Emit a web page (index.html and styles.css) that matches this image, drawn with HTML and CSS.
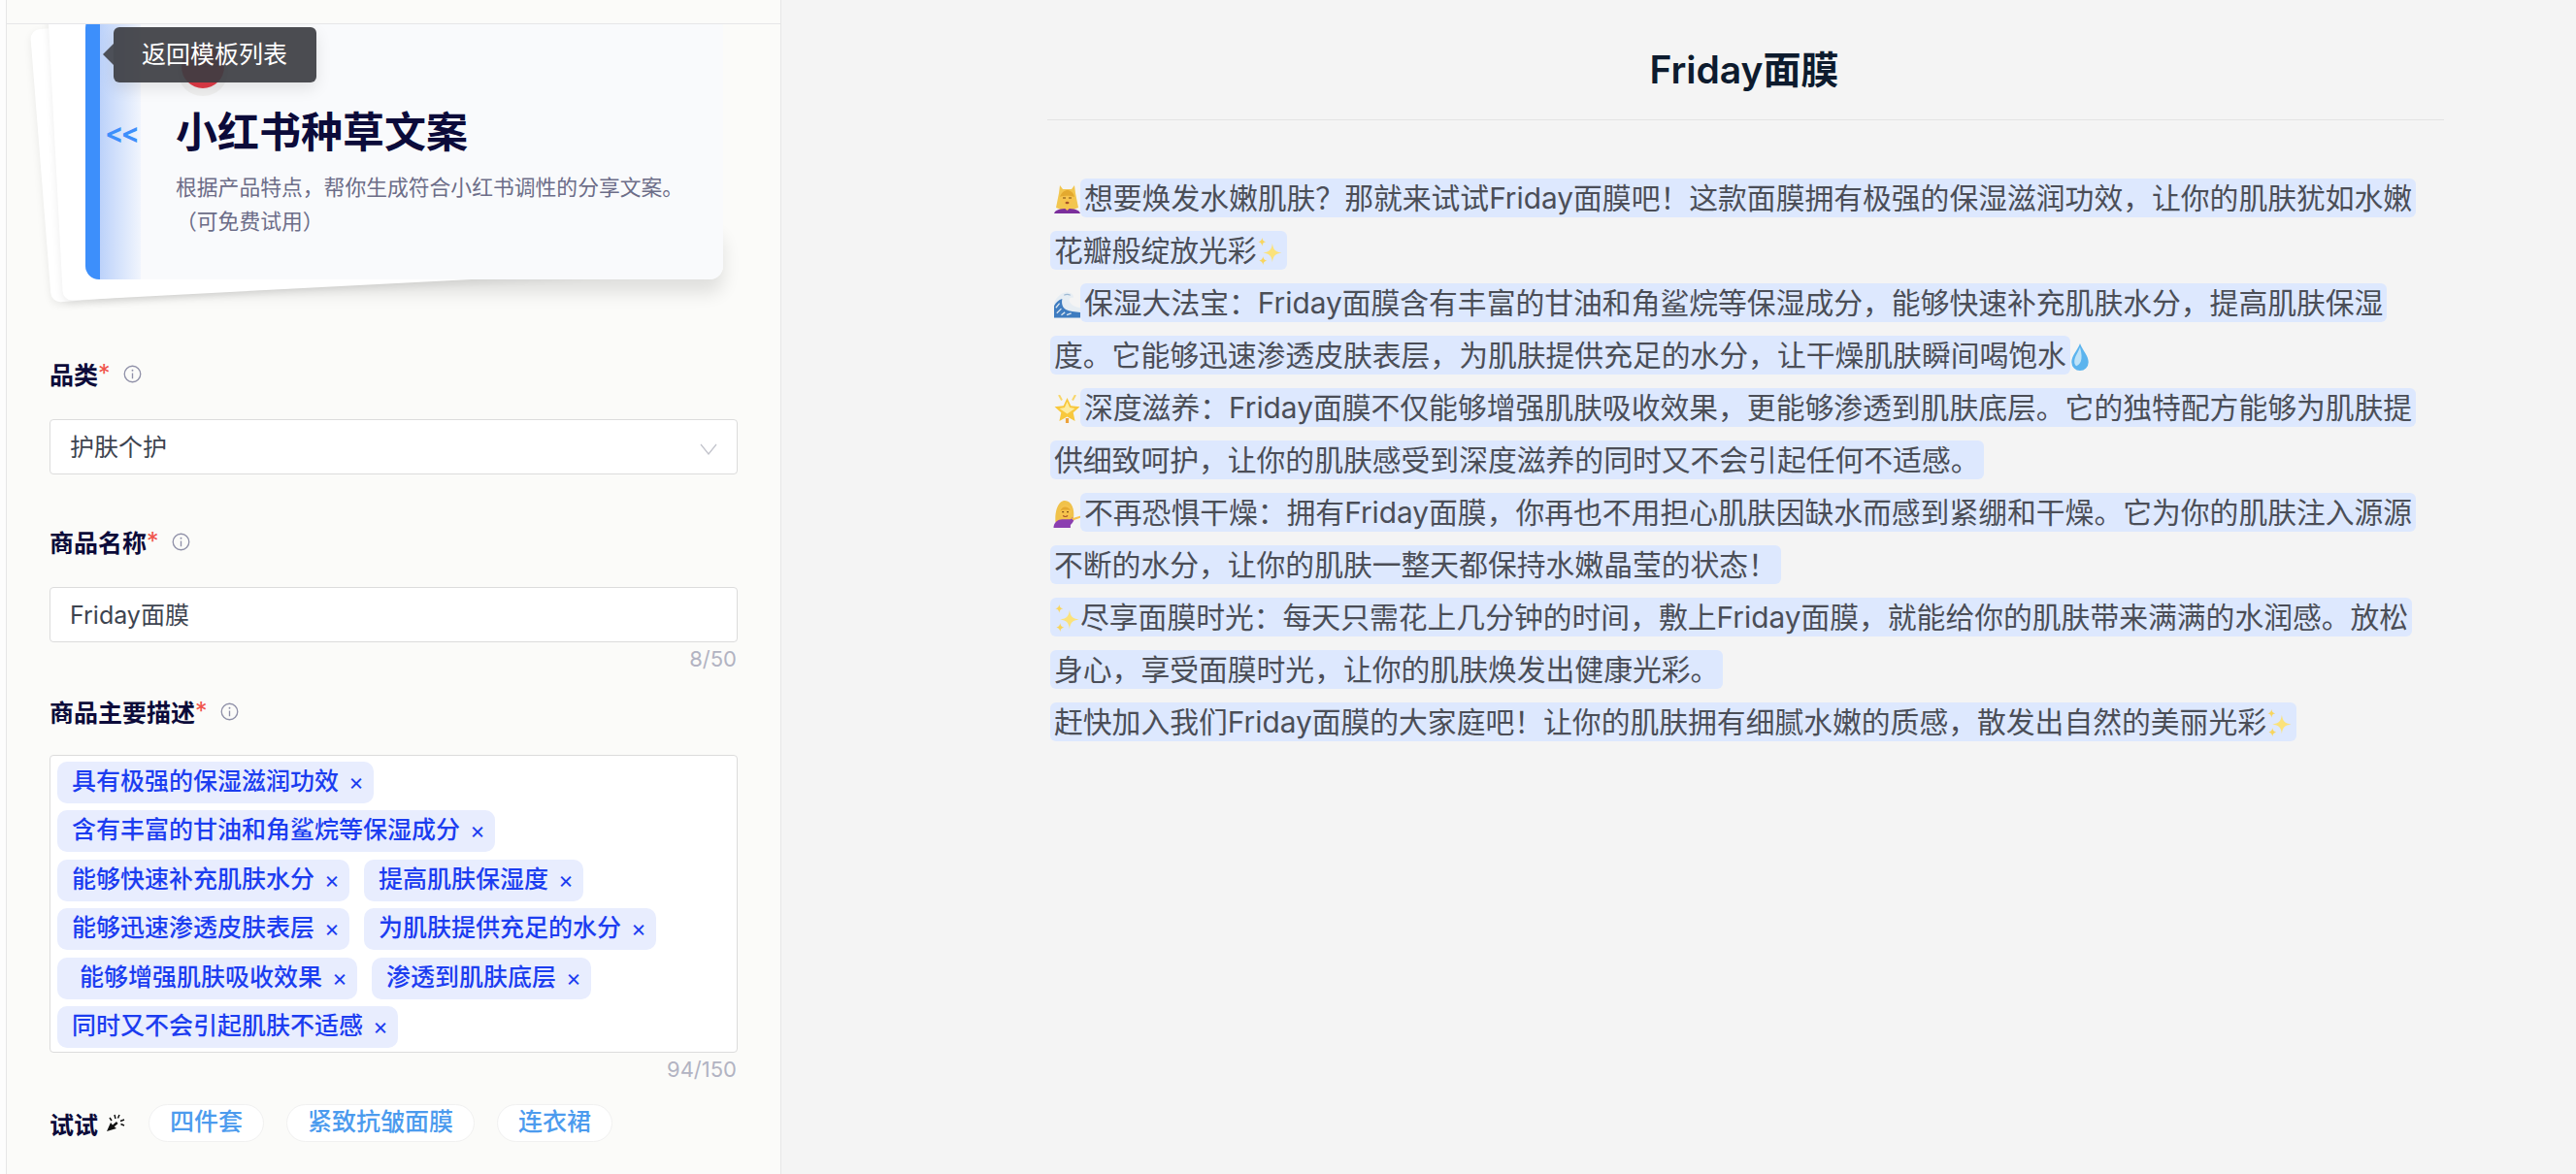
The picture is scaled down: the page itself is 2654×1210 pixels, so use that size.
FILE: index.html
```html
<!DOCTYPE html>
<html lang="zh-CN">
<head>
    <meta charset="UTF-8">
    <title>小红书种草文案</title>
    <link rel="stylesheet" href="styles.css">
</head>
<body>
<svg class="defs">
    <symbol id="e-woman" viewBox="0 0 27 29">
        <path d="M6 0l3 4h9l3-4 1 8 3 15-5 2H7l-5-2 3-15z" fill="#f2c64f"/>
        <ellipse cx="13.500" cy="13" rx="7" ry="8.500" fill="#f6c34d"/>
        <path d="M6 12c2-6 6-7 8-7s6 2 7 7c-4-1-9-2-15 0z" fill="#e3a92f"/>
        <path d="M9 13h3M15 13h3" stroke="#7a4a12" stroke-width="1.200"/>
        <ellipse cx="13.500" cy="18" rx="2" ry="1.200" fill="#a8552a"/>
        <path d="M0 29c1-4 7-5 13.500-5S26 25 27 29z" fill="#7b2f9c"/>
        <path d="M9 22h9l-4.500 4z" fill="#f6c34d"/>
    </symbol>
    <symbol id="e-wave" viewBox="0 0 29 30">
        <path d="M0 30V13C4 5 10 1 16 2c5 1 6 4 5 6-3-1-5 1-4 4 2 4 6 6 12 7v11z" fill="#e6edf3"/>
        <path d="M0 30V17c2-4 5-7 9-8-1 5 0 9 4 12 4 2 10 3 16 3v6z" fill="#3f7cc0"/>
        <path d="M2 19l4-5M3 25l5-5M8 27l4-3M14 27l5-2" stroke="#dfe8ef" stroke-width="1.400"/>
        <path d="M11 5c2-1 5-1 7 0" stroke="#9db9d3" stroke-width="1.200" fill="none"/>
    </symbol>
    <symbol id="e-star" viewBox="0 0 26 29">
        <path d="M13 3l3.800 8.200 9.200 1-6.800 6 1.900 8.800-8.100-4.600L4.900 27l1.900-8.800L0 12.200l9.200-1z" fill="#f8c83c"/>
        <path d="M13 7l2.600 6 5.400 1-8 5.500L5 14l5.400-1z" fill="#fdeca0"/>
        <path d="M4.500 0l3 5.500M21.500 0l-3 5.500" stroke="#f8d66a" stroke-width="2"/>
        <path d="M13 24v5" stroke="#eca23a" stroke-width="3.200"/>
    </symbol>
    <symbol id="e-tip" viewBox="0 0 30 30">
        <path d="M2 24C1 12 5 1 12 1s11 9 9 20l-4 3H6z" fill="#f0c24a"/>
        <ellipse cx="12.500" cy="13" rx="6.500" ry="7.500" fill="#f6c34d"/>
        <path d="M7 12c2-5 7-6 11-1-4 0-8-1-11 1z" fill="#e3a92f"/>
        <path d="M9 13h2M14 13h2" stroke="#7a4a12" stroke-width="1.400"/>
        <path d="M10 17c1 1.500 4 1.500 5 0" stroke="#a8552a" stroke-width="1.200" fill="none"/>
        <path d="M0 30c0-6 5-9 9-9h7c2 0 3 0 4-2l2 2c-1 3-3 5-4 6v3z" fill="#8b3fb0"/>
        <path d="M19 20c3-1 7-2 10-3 1 1 0 2-2 3l-6 2z" fill="#f6c34d"/>
    </symbol>
    <symbol id="e-spark" viewBox="0 0 27 30">
        <path d="M16 6c1 7 3 9 10 10-7 1-9 3-10 10-1-7-3-9-10-10 7-1 9-3 10-10z" fill="#fbe27a"/>
        <path d="M5 0c.5 3 1.500 4 4 4.500C6.500 5 5.500 6 5 9c-.5-3-1.500-4-4-4.500C3.500 4 4.500 3 5 0z" fill="#f8d55e"/>
        <path d="M6 20c.5 3 1.500 4 4 4.500-2.500.5-3.500 1.500-4 4.500-.5-3-1.500-4-4-4.500 2.500-.5 3.500-1.500 4-4.500z" fill="#f8d55e"/>
    </symbol>
    <symbol id="e-drop" viewBox="0 0 20 30">
        <path d="M10 1c3 8 9 13 9 20a9 9 0 0 1-18 0C1 14 7 9 10 1z" fill="#5cb4ee"/>
        <path d="M10 5C8 11 4 15 4 21c0 2 1 3 2 4 4-1 8-6 4-20z" fill="#bfe3f8"/>
    </symbol>
    <symbol id="i-info" viewBox="0 0 20 20">
        <circle cx="10" cy="10" r="8.700" fill="none" stroke="#8f90a8" stroke-width="1.400"/>
        <path d="M10 9v6" stroke="#8f90a8" stroke-width="1.400"/>
        <circle cx="10" cy="6" r="1" fill="#8f90a8"/>
    </symbol>
</svg>

<div class="edge"></div>

<aside class="side">
    <div class="top-band"></div>

    <div class="stack">
        <div class="sheet sheet-back"></div>
        <div class="sheet sheet-front"></div>
        <div class="card">
            <div class="card-strip"></div>
            <div class="card-back">&lt;&lt;</div>
            <div class="card-body">
                <div class="logo">小红书</div>
                <h1>小红书种草文案</h1>
                <p>根据产品特点，帮你生成符合小红书调性的分享文案。（可免费试用）</p>
            </div>
        </div>
        <div class="tooltip">返回模板列表</div>
    </div>

    <form class="form">
        <div class="field field-select">
            <label class="label">品类<em>*</em><svg class="info"><use href="#i-info"/></svg></label>
            <div class="select">
                <span>护肤个护</span>
                <svg class="chevron" viewBox="0 0 18 12"><path d="M1 1l8 10 8-10" fill="none" stroke="#c3c4cc" stroke-width="1.300"/></svg>
            </div>
        </div>

        <div class="field field-name">
            <label class="label">商品名称<em>*</em><svg class="info"><use href="#i-info"/></svg></label>
            <input class="input" type="text" value="Friday面膜">
            <div class="count">8/50</div>
        </div>

        <div class="field field-tags">
            <label class="label">商品主要描述<em>*</em><svg class="info"><use href="#i-info"/></svg></label>
            <div class="tags">
                <span class="tag">具有极强的保湿滋润功效<i>×</i></span>
                <span class="tag">含有丰富的甘油和角鲨烷等保湿成分<i>×</i></span>
                <span class="tag">能够快速补充肌肤水分<i>×</i></span>
                <span class="tag">提高肌肤保湿度<i>×</i></span>
                <span class="tag">能够迅速渗透皮肤表层<i>×</i></span>
                <span class="tag">为肌肤提供充足的水分<i>×</i></span>
                <span class="tag tag-space">能够增强肌肤吸收效果<i>×</i></span>
                <span class="tag">渗透到肌肤底层<i>×</i></span>
                <span class="tag">同时又不会引起肌肤不适感<i>×</i></span>
            </div>
            <div class="count">94/150</div>
        </div>

        <div class="try">
            <span class="try-label">试试</span>
            <svg class="try-icon" viewBox="0 0 20 20">
                <path d="M1 18l4-9 2 2.500L11 8l1.500 2-3.800 3.300L11 15z" fill="#111"/>
                <path d="M9 1l1 4M14 1l-1.500 3.500M19 6l-4 1.500M19 12l-3.500-1.500M4 4l2 3" stroke="#111" stroke-width="1.500"/>
            </svg>
            <span class="chip">四件套</span>
            <span class="chip">紧致抗皱面膜</span>
            <span class="chip">连衣裙</span>
        </div>
    </form>
</aside>

<main class="main">
    <div class="doc">
        <h2>Friday面膜</h2>
        <div class="text">
            <p><svg class="emoji"><use href="#e-woman"/></svg><span class="hl">想要焕发水嫩肌肤？那就来试试Friday面膜吧！这款面膜拥有极强的保湿滋润功效，让你的肌肤犹如水嫩花瓣般绽放光彩<svg class="emoji"><use href="#e-spark"/></svg></span></p>
            <p><svg class="emoji"><use href="#e-wave"/></svg><span class="hl">保湿大法宝：Friday面膜含有丰富的甘油和角鲨烷等保湿成分，能够快速补充肌肤水分，提高肌肤保湿度。它能够迅速渗透皮肤表层，为肌肤提供充足的水分，让干燥肌肤瞬间喝饱水</span><svg class="emoji emoji-drop"><use href="#e-drop"/></svg></p>
            <p><svg class="emoji"><use href="#e-star"/></svg><span class="hl">深度滋养：Friday面膜不仅能够增强肌肤吸收效果，更能够渗透到肌肤底层。它的独特配方能够为肌肤提供细致呵护，让你的肌肤感受到深度滋养的同时又不会引起任何不适感。</span></p>
            <p><svg class="emoji emoji-tip"><use href="#e-tip"/></svg><span class="hl">不再恐惧干燥：拥有Friday面膜，你再也不用担心肌肤因缺水而感到紧绷和干燥。它为你的肌肤注入源源不断的水分，让你的肌肤一整天都保持水嫩晶莹的状态！</span></p>
            <p><span class="hl"><svg class="emoji"><use href="#e-spark"/></svg>尽享面膜时光：每天只需花上几分钟的时间，敷上Friday面膜，就能给你的肌肤带来满满的水润感。放松身心，享受面膜时光，让你的肌肤焕发出健康光彩。</span></p>
            <p><span class="hl">赶快加入我们Friday面膜的大家庭吧！让你的肌肤拥有细腻水嫩的质感，散发出自然的美丽光彩<svg class="emoji"><use href="#e-spark"/></svg></span></p>
        </div>
    </div>
</main>
</body>
</html>
```

FILE: styles.css
```css
/* Global styles */
* {
    box-sizing: border-box;
}

html, body {
    height: 100%;
}

body {
    margin: 0;
    display: flex;
    height: 1210px;
    overflow: hidden;
    background-color: #f4f4f4;
    font-family: Inter, "Noto Sans CJK SC", sans-serif;
}

.defs {
    position: absolute;
    width: 0;
    height: 0;
}

.edge {
    width: 7px;
    background-color: #fdfdfd;
    border-right: 1px solid #e6e6e6;
}

/* Left panel */
.side {
    position: relative;
    width: 798px;
    height: 1210px;
    overflow: hidden;
    background-color: #fbfbf9;
    border-right: 1px solid #e6e6e6;
}

.top-band {
    position: relative;
    z-index: 3;
    height: 25px;
    background-color: #fbfbf9;
    border-bottom: 1px solid #e6e6e8;
}

/* Template card with the sheets behind it */
.stack {
    position: relative;
    z-index: 1;
    width: 657px;
    height: 273px;
    margin: -10px 0 0 81px;
}

.sheet {
    position: absolute;
    background-color: #ffffff;
    border-radius: 10px;
    transform-origin: 0 100%;
    box-shadow: 0 3px 8px rgba(0, 0, 0, 0.08);
}

.sheet-back {
    left: -35px;
    bottom: -24px;
    width: 600px;
    height: 282px;
    transform: rotate(-4.5deg);
}

.sheet-front {
    left: -23px;
    bottom: -22px;
    width: 640px;
    height: 310px;
    transform: rotate(-3deg);
}

.card {
    position: relative;
    display: flex;
    height: 100%;
    overflow: hidden;
    background-color: #f9fafc;
    border-radius: 14px;
}

.stack::after {
    content: "";
    position: absolute;
    left: 0;
    right: 0;
    bottom: 0;
    height: 60px;
    border-radius: 14px;
    box-shadow: 0 14px 18px rgba(0, 0, 0, 0.11);
    z-index: -1;
}

.card-strip {
    width: 15px;
    background-color: #3d8ffb;
}

.card-back {
    width: 42px;
    padding-top: 107px;
    padding-left: 5px;
    background: linear-gradient(90deg, #bcd2fa, #f1f5fd);
    color: #3d8ffb;
    font-size: 29px;
    font-weight: 600;
    letter-spacing: -3px;
    line-height: 30px;
}

.card-body {
    position: relative;
    flex: 1;
    padding: 91px 34px 0 36px;
}

.logo {
    position: absolute;
    left: 42px;
    top: 32px;
    width: 44px;
    height: 44px;
    border-radius: 50%;
    background-color: #e23b47;
    box-shadow: 0 0 0 3px #f0f0f0, 0 4px 0 4px #f0f0f0;
    color: #8f3036;
    font-size: 11px;
    line-height: 36px;
    text-align: center;
}

.card-body h1 {
    margin: 0;
    color: #0c0b3a;
    font-size: 43px;
    font-weight: 700;
    line-height: 60px;
}

.card-body p {
    margin: 10px 0 0;
    color: #6c6d88;
    font-size: 21.8px;
    line-height: 34.5px;
}

.tooltip {
    position: absolute;
    z-index: 4;
    left: 29px;
    top: 13px;
    width: 209px;
    height: 57px;
    padding-left: 29px;
    border-radius: 6px;
    background-color: rgba(60, 61, 66, 0.92);
    color: #ffffff;
    font-size: 25px;
    line-height: 56px;
    box-shadow: 0 6px 16px rgba(0, 0, 0, 0.1);
}

.tooltip::before {
    content: "";
    position: absolute;
    left: -11px;
    top: 17px;
    border-style: solid;
    border-width: 11px 11px 11px 0;
    border-color: transparent rgba(60, 61, 66, 0.88) transparent transparent;
}

/* Form */
.form {
    width: 752px;
    padding: 82px 0 0 44px;
}

.label {
    display: flex;
    align-items: center;
    height: 30px;
    margin-bottom: 32px;
    color: #0c0b3a;
    font-size: 25px;
    font-weight: 600;
}

.label em {
    align-self: flex-start;
    color: #f0544c;
    font-style: normal;
    font-weight: 400;
}

.info {
    width: 19px;
    height: 19px;
    margin-left: 13px;
}

.field-select {
    margin-bottom: 54px;
}

.field-name {
    margin-bottom: 25px;
}

.field-name .label {
    margin-bottom: 32px;
}

.field-tags .label {
    margin-bottom: 30px;
}

.select, .input {
    display: flex;
    align-items: center;
    justify-content: space-between;
    width: 709px;
    height: 57px;
    padding: 0 20px 3px 20px;
    background-color: #ffffff;
    border: 1px solid #dcdcdc;
    border-radius: 4px;
    color: #3d4450;
    font-family: inherit;
    font-size: 25px;
}

.chevron {
    width: 18px;
    height: 12px;
    margin-top: 7px;
}

.count {
    height: 28px;
    margin-top: 3px;
    width: 708px;
    color: #b2b3c2;
    font-size: 22px;
    line-height: 28px;
    text-align: right;
}

.tags {
    display: flex;
    flex-wrap: wrap;
    align-content: flex-start;
    gap: 7.4px 15px;
    width: 709px;
    height: 307px;
    padding: 6px 7px;
    background-color: #ffffff;
    border: 1px solid #dcdcdc;
    border-radius: 4px;
}

.tag {
    height: 43px;
    padding: 0 10px 0 15px;
    background-color: #e8edfe;
    border-radius: 10px;
    color: #1c3df0;
    font-size: 25px;
    font-weight: 500;
    line-height: 41px;
    white-space: pre;
}

.tag i {
    margin-left: 10px;
    font-size: 24px;
    font-style: normal;
    font-weight: 400;
}

.tag-space {
    padding-left: 23px;
}

.try {
    display: flex;
    align-items: center;
    margin-top: 22px;
}

.try-label {
    color: #0c0b3a;
    font-size: 25px;
    font-weight: 600;
}

.try-icon {
    width: 20px;
    height: 20px;
    margin-left: 8px;
    margin-right: 24px;
}

.chip {
    height: 39px;
    margin-right: 23px;
    padding: 0 21px;
    background-color: #ffffff;
    border: 1px solid #f1f1f1;
    border-radius: 20px;
    color: #4c9bee;
    font-size: 25px;
    font-weight: 500;
    line-height: 35px;
}

/* Right panel */
.main {
    flex: 1;
}

.doc {
    width: 1439px;
    margin-left: 274px;
}

.doc h2 {
    height: 124px;
    margin: 0;
    padding: 48px 3px 0 0;
    border-bottom: 1px solid #e3e3e3;
    color: #0d1b2e;
    font-size: 39px;
    font-weight: 600;
    line-height: 48px;
    text-align: center;
}

.text {
    width: 1428px;
    margin: 53px 0 0 3px;
    color: #4b4e57;
    font-size: 29.8px;
    line-height: 54px;
}

.text p {
    margin: 0;
}

.hl {
    padding: 2px 4px;
    background-color: #dde8fe;
    border-radius: 6px;
    -webkit-box-decoration-break: clone;
    box-decoration-break: clone;
}

.emoji {
    width: 27px;
    height: 29px;
    vertical-align: -5px;
}

.text > p > .emoji:first-child {
    margin-left: 4px;
}

.text > p > .emoji-tip:first-child {
    width: 30px;
    margin-left: 3px;
    margin-right: -2px;
}

.emoji-drop {
    width: 20px;
}
```
